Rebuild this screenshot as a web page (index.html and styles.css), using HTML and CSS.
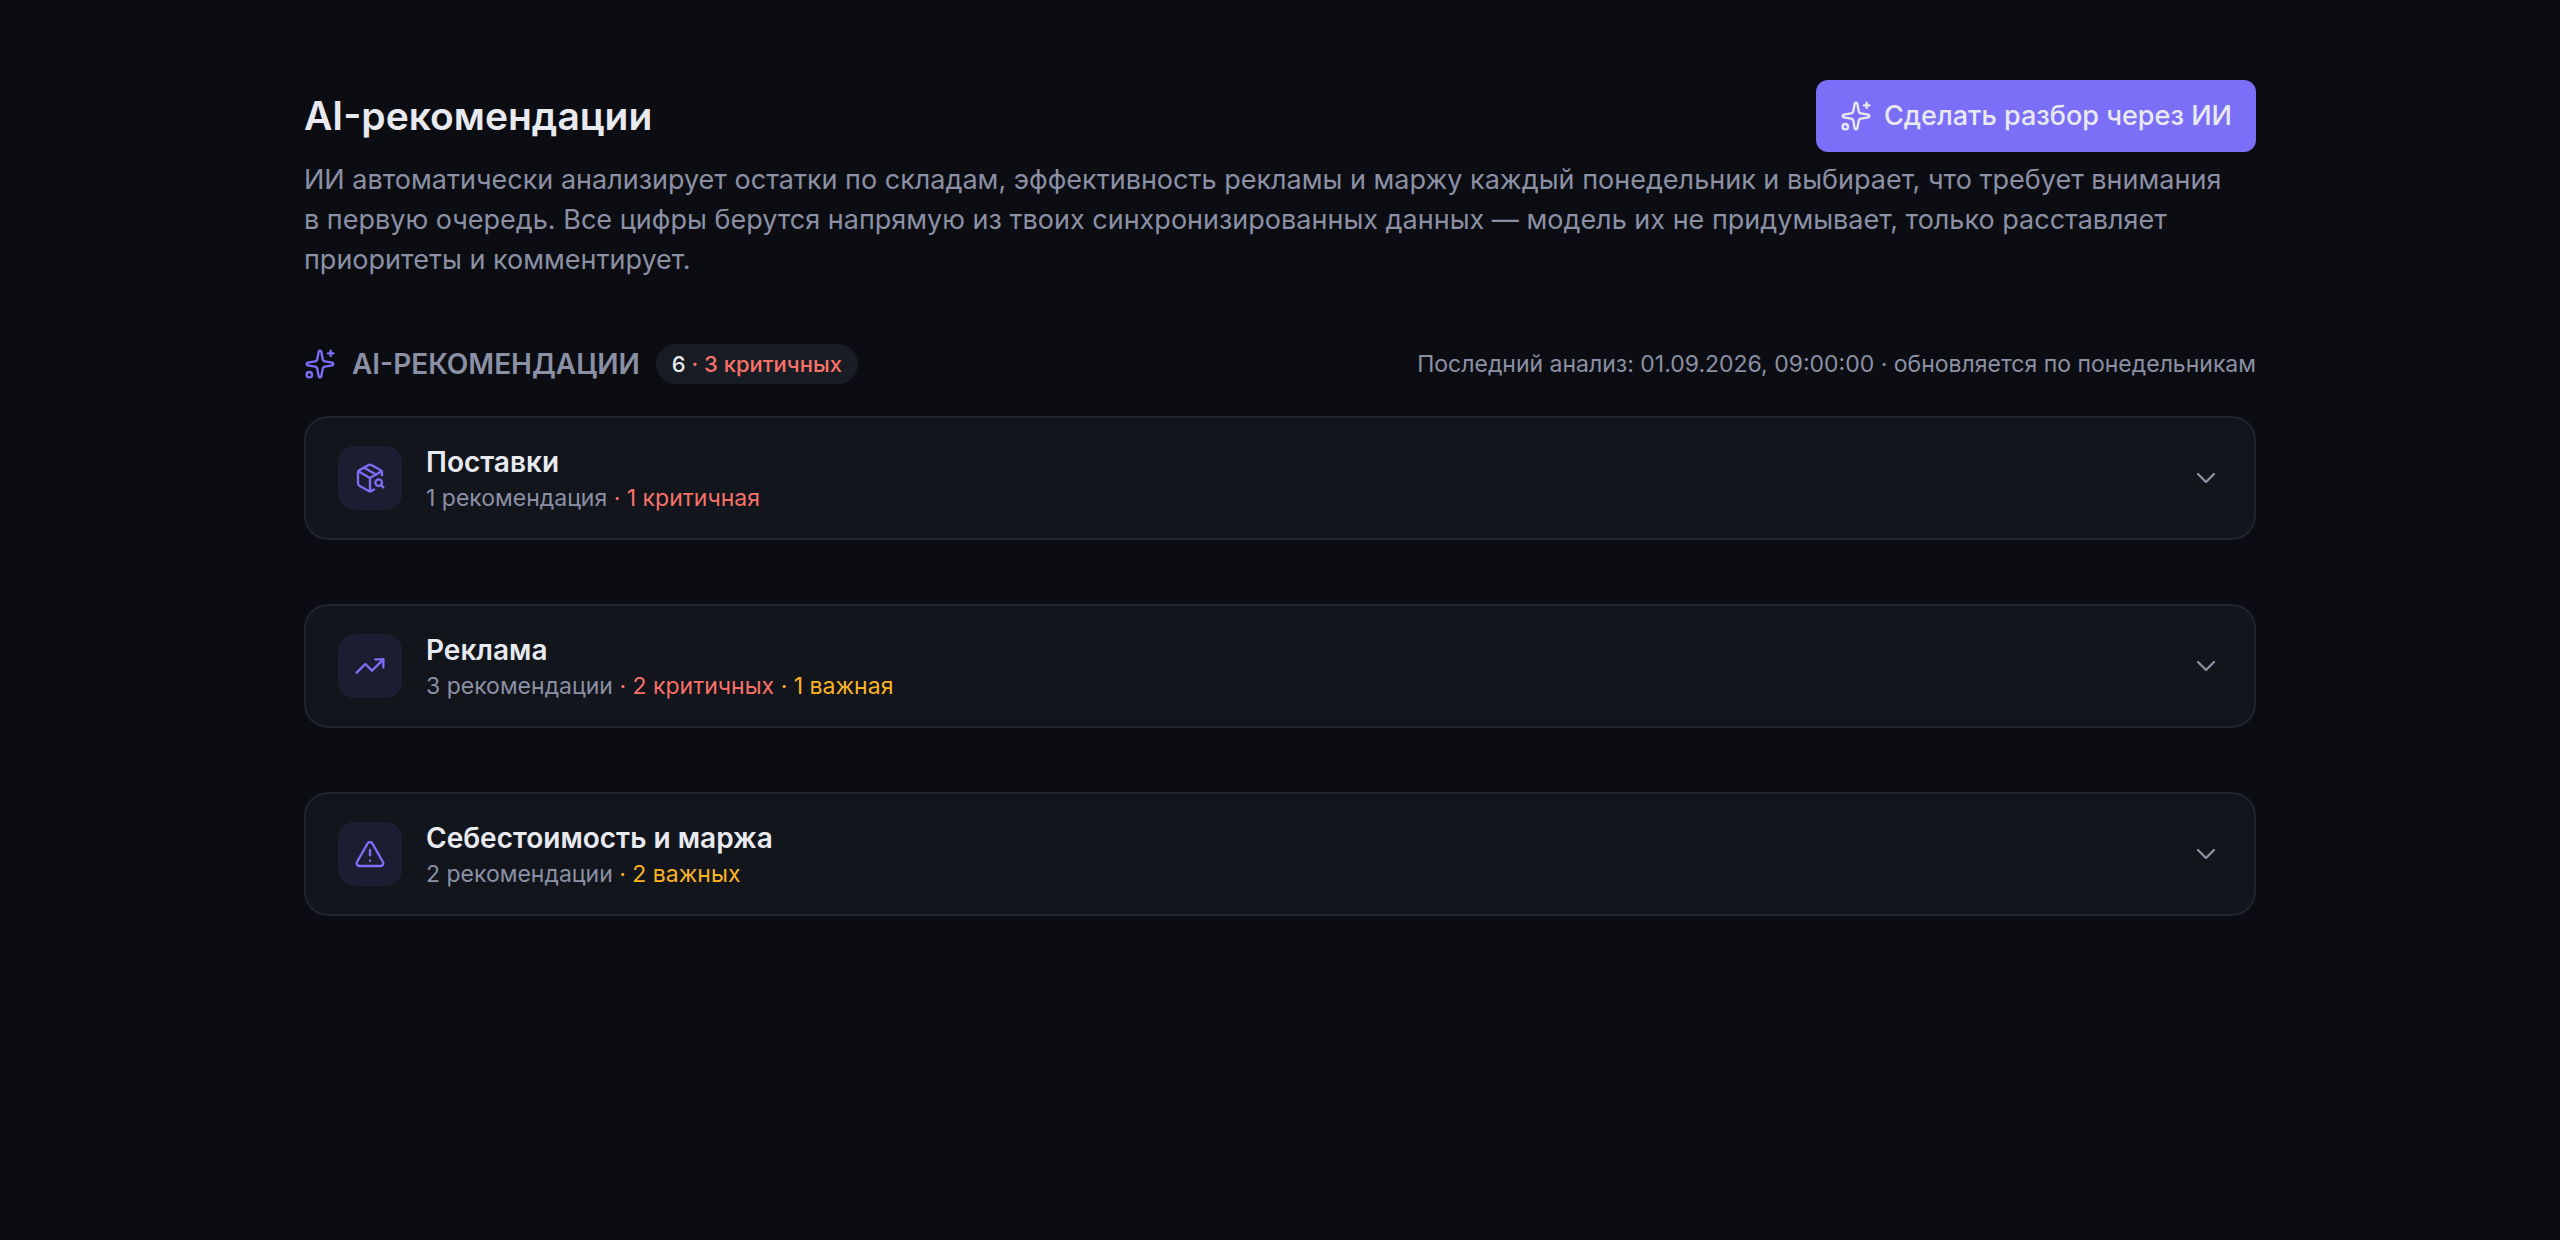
FILE: index.html
```html
<!DOCTYPE html>
<html lang="ru">
<head>
    <meta charset="UTF-8">
    <meta name="viewport" content="width=device-width, initial-scale=1.0">
    <title>AI-рекомендации</title>
    <link rel="stylesheet" href="styles.css">
</head>
<body>
    <main class="page">
        <header class="page-header">
            <div class="title-row">
                <h1>AI-рекомендации</h1>
                <button class="analyze-button" type="button">
                    <svg class="icon" viewBox="0 0 24 24" aria-hidden="true">
                        <path d="M11.017 2.814a1 1 0 0 1 1.966 0l1.051 5.558a2 2 0 0 0 1.594 1.594l5.558 1.051a1 1 0 0 1 0 1.966l-5.558 1.051a2 2 0 0 0-1.594 1.594l-1.051 5.558a1 1 0 0 1-1.966 0l-1.051-5.558a2 2 0 0 0-1.594-1.594l-5.558-1.051a1 1 0 0 1 0-1.966l5.558-1.051a2 2 0 0 0 1.594-1.594z"/>
                        <path d="M20 2v4"/>
                        <path d="M22 4h-4"/>
                        <circle cx="4" cy="20" r="2"/>
                    </svg>
                    Сделать разбор через ИИ
                </button>
            </div>
            <p class="intro">ИИ автоматически анализирует остатки по складам, эффективность рекламы и маржу каждый понедельник и выбирает, что требует внимания в&nbsp;первую очередь. Все цифры берутся напрямую из твоих синхронизированных данных — модель их не придумывает, только расставляет приоритеты и комментирует.</p>
        </header>

        <section class="recommendations">
            <div class="section-header">
                <svg class="icon accent" viewBox="0 0 24 24" aria-hidden="true">
                    <path d="M11.017 2.814a1 1 0 0 1 1.966 0l1.051 5.558a2 2 0 0 0 1.594 1.594l5.558 1.051a1 1 0 0 1 0 1.966l-5.558 1.051a2 2 0 0 0-1.594 1.594l-1.051 5.558a1 1 0 0 1-1.966 0l-1.051-5.558a2 2 0 0 0-1.594-1.594l-5.558-1.051a1 1 0 0 1 0-1.966l5.558-1.051a2 2 0 0 0 1.594-1.594z"/>
                    <path d="M20 2v4"/>
                    <path d="M22 4h-4"/>
                    <circle cx="4" cy="20" r="2"/>
                </svg>
                <h2>AI-рекомендации</h2>
                <span class="badge">6 <span class="critical">· 3 критичных</span></span>
                <p class="updated">Последний анализ: 01.09.2026, 09:00:00 · обновляется по понедельникам</p>
            </div>

            <div class="cards">
                <button class="card" type="button" aria-expanded="false">
                    <span class="card-icon">
                        <svg class="icon" viewBox="0 0 24 24" aria-hidden="true">
                            <path d="M21 10V8a2 2 0 0 0-1-1.73l-7-4a2 2 0 0 0-2 0l-7 4A2 2 0 0 0 3 8v8a2 2 0 0 0 1 1.73l7 4a2 2 0 0 0 2 0l2-1.14"/>
                            <path d="m7.5 4.27 9 5.15"/>
                            <path d="M3.29 7 12 12l8.71-5"/>
                            <path d="M12 22V12"/>
                            <circle cx="18.5" cy="15.5" r="2.5"/>
                            <path d="M20.27 17.27 22 19"/>
                        </svg>
                    </span>
                    <span class="card-text">
                        <span class="card-title">Поставки</span>
                        <span class="card-meta">1 рекомендация <span class="critical">· 1 критичная</span></span>
                    </span>
                    <svg class="icon chevron" viewBox="0 0 24 24" aria-hidden="true">
                        <path d="m6 9 6 6 6-6"/>
                    </svg>
                </button>

                <button class="card" type="button" aria-expanded="false">
                    <span class="card-icon">
                        <svg class="icon" viewBox="0 0 24 24" aria-hidden="true">
                            <path d="M16 7h6v6"/>
                            <path d="m22 7-8.5 8.5-5-5L2 17"/>
                        </svg>
                    </span>
                    <span class="card-text">
                        <span class="card-title">Реклама</span>
                        <span class="card-meta">3 рекомендации <span class="critical">· 2 критичных</span> <span class="important">· 1 важная</span></span>
                    </span>
                    <svg class="icon chevron" viewBox="0 0 24 24" aria-hidden="true">
                        <path d="m6 9 6 6 6-6"/>
                    </svg>
                </button>

                <button class="card" type="button" aria-expanded="false">
                    <span class="card-icon">
                        <svg class="icon" viewBox="0 0 24 24" aria-hidden="true">
                            <path d="m21.73 18-8-14a2 2 0 0 0-3.48 0l-8 14A2 2 0 0 0 4 21h16a2 2 0 0 0 1.73-3"/>
                            <path d="M12 9v4"/>
                            <path d="M12 17h.01"/>
                        </svg>
                    </span>
                    <span class="card-text">
                        <span class="card-title">Себестоимость и маржа</span>
                        <span class="card-meta">2 рекомендации <span class="important">· 2 важных</span></span>
                    </span>
                    <svg class="icon chevron" viewBox="0 0 24 24" aria-hidden="true">
                        <path d="m6 9 6 6 6-6"/>
                    </svg>
                </button>
            </div>
        </section>
    </main>
</body>
</html>
```

FILE: styles.css
```css
* {
    box-sizing: border-box;
}

body {
    margin: 0;
    min-height: 100vh;
    background: #0b0d12;
    color: #e8eaf0;
    font-family: Inter, "Liberation Sans", sans-serif;
    font-size: 27px;
    line-height: 40px;
}

h1, h2, p {
    margin: 0;
}

button {
    font: inherit;
    color: inherit;
    cursor: pointer;
}

.page {
    display: flex;
    flex-direction: column;
    gap: 64px;
    max-width: 2048px;
    margin: 0 auto;
    padding: 80px 48px;
}

.page-header {
    display: flex;
    flex-direction: column;
    gap: 8px;
}

.title-row {
    display: flex;
    align-items: center;
    justify-content: space-between;
    gap: 24px;
}

h1 {
    font-size: 39px;
    font-weight: 600;
    line-height: 56px;
}

.icon {
    flex-shrink: 0;
    width: 32px;
    height: 32px;
    fill: none;
    stroke: currentColor;
    stroke-width: 1.75;
    stroke-linecap: round;
    stroke-linejoin: round;
}

.analyze-button {
    display: flex;
    align-items: center;
    gap: 12px;
    padding: 16px 24px;
    border: 0;
    border-radius: 12px;
    background: #7c6ff7;
    font-weight: 500;
}

.intro {
    color: #8b90a5;
}

.recommendations {
    display: flex;
    flex-direction: column;
    gap: 32px;
}

.section-header {
    display: flex;
    align-items: center;
    gap: 16px;
}

h2 {
    color: #8b90a5;
    font-size: 28px;
    font-weight: 600;
    text-transform: uppercase;
}

.badge {
    padding: 4px 16px;
    border-radius: 20px;
    background: #181c24;
    font-size: 22px;
    font-weight: 500;
    line-height: 32px;
}

.updated {
    margin-left: auto;
    color: #8b90a5;
    font-size: 23px;
    line-height: 32px;
}

.cards {
    display: flex;
    flex-direction: column;
    gap: 64px;
}

.card {
    display: flex;
    align-items: center;
    gap: 24px;
    width: 100%;
    padding: 24px 32px;
    border: 2px solid #1f242e;
    border-radius: 24px;
    background: #12151c;
    text-align: left;
}

.card-icon {
    display: flex;
    align-items: center;
    justify-content: center;
    width: 64px;
    height: 64px;
    border-radius: 16px;
    background: #1c1d30;
    color: #7c6ff7;
}

.card-text {
    display: flex;
    flex-direction: column;
    flex: 1;
}

.card-title {
    font-size: 28px;
    font-weight: 600;
}

.card-meta {
    color: #8b90a5;
    font-size: 23px;
    line-height: 32px;
}

.chevron {
    color: #8b90a5;
}

.accent {
    color: #7c6ff7;
}

.critical {
    color: #f87168;
}

.important {
    color: #fbb324;
}
```
